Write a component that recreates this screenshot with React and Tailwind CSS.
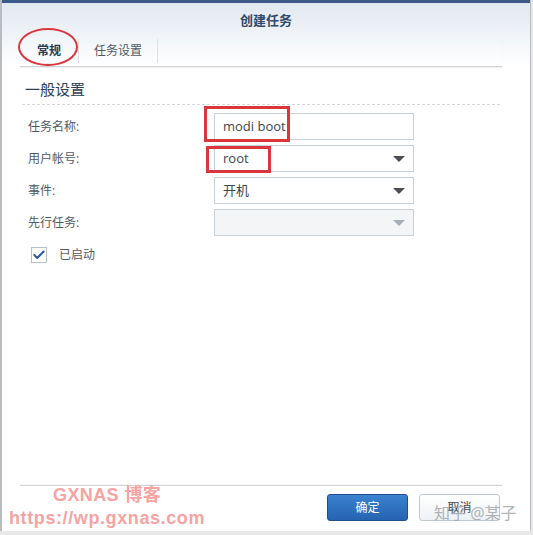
import { Check } from "lucide-react";

const Field = ({ label, value, select, disabled }) => (
  <div className="flex items-center h-[32px]">
    <div className="w-[212px] pl-[26px] text-[12px] text-[#505a64]">{label}</div>
    <div
      className={`relative w-[200px] h-[27px] border border-[#c8d0d8] flex items-center pl-[8px] text-[13px] text-[#3c4650] ${
        disabled ? "bg-[#f3f5f7]" : "bg-white"
      }`}
    >
      {value}
      {select && (
        <span
          className={`absolute right-[8px] top-[10px] w-0 h-0 border-l-[6px] border-r-[6px] border-t-[6px] border-l-transparent border-r-transparent ${
            disabled ? "border-t-[#a7aeb6]" : "border-t-[#4a4f55]"
          }`}
        ></span>
      )}
    </div>
  </div>
);

export default function App() {
  return (
    <div
      className="relative w-[533px] h-[535px] bg-[#e8e8e8] overflow-hidden"
      style={{ fontFamily: '"Open Sans", "Noto Sans CJK SC", sans-serif' }}
    >
      <div className="w-[531px] h-[531px] bg-white border-l-2 border-r border-[#b8bcc0] flex flex-col">
        <div className="h-[3px] bg-[#3c5a88]"></div>

        {/* Header */}
        <div className="bg-gradient-to-b from-[#e1e8f0] to-white">
          <div className="h-[33px] pt-[2px] flex items-center justify-center text-[13px] font-bold text-[#2f4a6c]">
            创建任务
          </div>
          <div className="ml-[18px] mr-[28px] h-[31px] flex items-center border-b border-[#d0d4d8] shadow-[0_1px_1px_rgba(0,0,0,0.06)]">
            <div className="relative w-[58px] h-full flex items-center justify-center text-[12px] font-bold text-[#2a3a50]">
              常规
              <span className="absolute bottom-[-1px] left-[24px] w-0 h-0 border-l-[4px] border-r-[4px] border-b-[4px] border-l-transparent border-r-transparent border-b-[#c8ccd0]"></span>
            </div>
            <div className="w-px h-[24px] bg-[#dde1e5]"></div>
            <div className="w-[78px] h-full flex items-center justify-center text-[12px] text-[#505a64]">
              任务设置
            </div>
            <div className="w-px h-[24px] bg-[#dde1e5]"></div>
          </div>
        </div>

        {/* Body */}
        <div className="flex-1 flex flex-col">
          <div className="ml-[20px] mr-[30px] mt-[11px] pb-[3px] border-b border-dashed border-[#d4d8dc] pl-[3px] text-[15px] text-[#2f4055]">
            一般设置
          </div>
          <div className="mt-[6px] flex flex-col">
            <Field label="任务名称:" value="modi boot" />
            <Field label="用户帐号:" value="root" select />
            <Field label="事件:" value="开机" select />
            <Field label="先行任务:" value="" select disabled />
          </div>
          <div className="flex items-center mt-[7px] pl-[29px] gap-[12px]">
            <div className="w-[16px] h-[16px] border border-[#b8c0c8] bg-white flex items-center justify-center">
              <Check className="w-[16px] h-[16px] text-[#2a5d9c]" strokeWidth={3.5} />
            </div>
            <span className="text-[12px] text-[#505a64]">已启动</span>
          </div>
        </div>

        {/* Footer */}
        <div className="ml-[18px] mr-[28px] pr-[2px] border-t border-[#d0d4d8] shadow-[0_-1px_1px_rgba(0,0,0,0.04)] h-[46px] flex items-center justify-end gap-[11px] pb-[2px]">
          <button className="w-[81px] h-[27px] rounded-[3px] border border-[#1f4f8f] bg-gradient-to-b from-[#3a82d0] to-[#2563b0] text-white text-[12px]">
            确定
          </button>
          <button className="w-[81px] h-[27px] rounded-[3px] border border-[#c0c8d0] bg-gradient-to-b from-white to-[#eef1f4] text-[#404850] text-[12px]">
            取消
          </button>
        </div>
      </div>

      {/* annotations */}
      <div className="absolute left-[18px] top-[28px] w-[60px] h-[38px] rounded-[50%] border-2 border-[#d9363e]"></div>
      <div className="absolute left-[204px] top-[106px] w-[86px] h-[36px] border-[3px] border-[#d9363e]"></div>
      <div className="absolute left-[206px] top-[146px] w-[65px] h-[27px] border-[3px] border-[#d9363e]"></div>

      {/* watermarks */}
      <div
        className="absolute left-[9px] top-[486px] text-[#f6a3a3] font-bold leading-none"
        style={{ fontFamily: '"Liberation Sans", "Noto Sans CJK SC", sans-serif' }}
      >
        <div className="pl-[44px] text-[18px] tracking-[0.4px]">GXNAS 博客</div>
        <div className="mt-[5px] text-[18px] tracking-[0.6px]">https://wp.gxnas.com</div>
      </div>
      <div className="absolute left-[434px] top-[505px] text-[16px] text-[#9aa0a6]/80 leading-none">
        知乎 @某子
      </div>
    </div>
  );
}
